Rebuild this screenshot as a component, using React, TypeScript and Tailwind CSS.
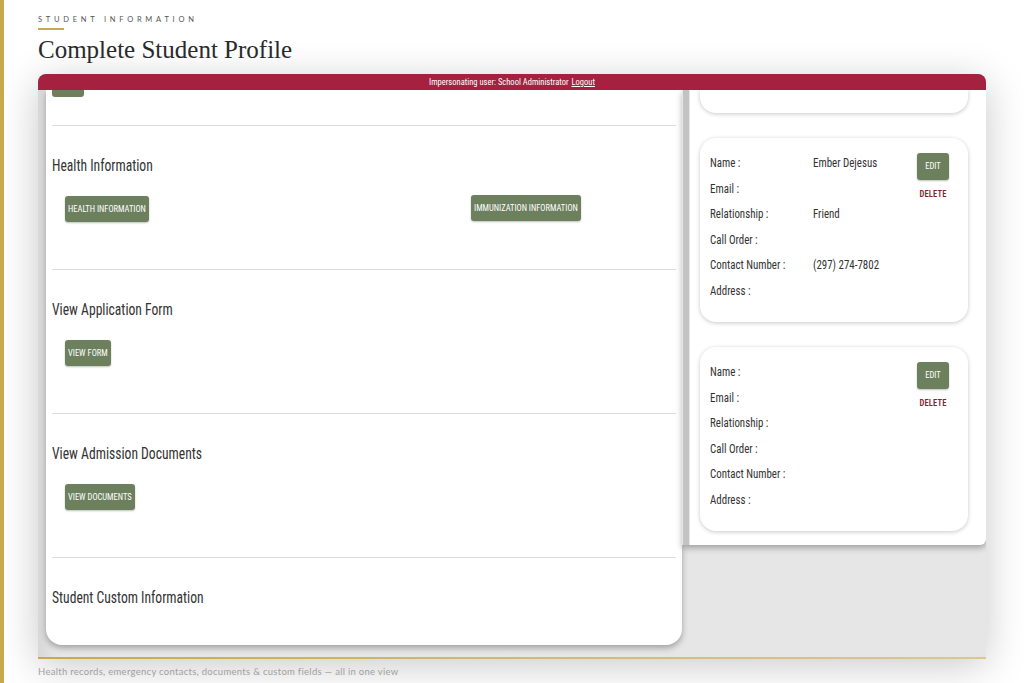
import type { FC, ReactNode } from 'react'

const cond =
  "font-['Roboto_Condensed','Liberation_Sans_Narrow','DejaVu_Sans_Condensed',Roboto,sans-serif] font-stretch-condensed"

const GreenButton: FC<{ label: string }> = ({ label }) => (
  <button
    className={`${cond} h-[26px] rounded-[3px] bg-[#6c805e] px-[3px] text-[8.5px] uppercase text-white shadow-[0_1px_2px_rgba(0,0,0,0.25)]`}
  >
    {label}
  </button>
)

const Section: FC<{ title: string; height: string; children?: ReactNode }> = ({ title, height, children }) => (
  <div className={`border-t border-[#dedede] ${height}`}>
    <h3 className="mt-[29px] origin-left scale-x-[0.8] text-[17px] leading-[20px] text-[#333]">{title}</h3>
    {children && <div className="mt-[20px] flex">{children}</div>}
  </div>
)

type Contact = {
  name?: string
  email?: string
  relationship?: string
  callOrder?: string
  phone?: string
  address?: string
}

const ContactCard: FC<{ contact: Contact }> = ({ contact }) => {
  const rows: [string, string | undefined][] = [
    ['Name :', contact.name],
    ['Email :', contact.email],
    ['Relationship :', contact.relationship],
    ['Call Order :', contact.callOrder],
    ['Contact Number :', contact.phone],
    ['Address :', contact.address],
  ]
  return (
    <div className="flex h-[184px] rounded-[16px] bg-white pl-[10px] pr-[19px] pt-[12px] shadow-[0_1px_4px_rgba(0,0,0,0.22)]">
      <div className="flex-1">
        {rows.map(([label, value]) => (
          <div key={label} className="flex h-[25.6px] items-center text-[13px] text-[#333]">
            <span className="w-[103px]">
              <span className="inline-block origin-left scale-x-[0.84]">{label}</span>
            </span>
            <span className="inline-block origin-left scale-x-[0.84]">{value}</span>
          </div>
        ))}
      </div>
      <div className="flex w-[32px] flex-col items-center pt-[3px]">
        <button
          className={`${cond} h-[27px] w-[32px] rounded-[3px] bg-[#6c805e] text-[8.5px] text-white shadow-[0_1px_2px_rgba(0,0,0,0.25)]`}
        >
          EDIT
        </button>
        <span className="mt-[8px] text-[8.5px] font-semibold tracking-[0.02em] text-[#7d2630]">DELETE</span>
      </div>
    </div>
  )
}

export default function App() {
  return (
    <div className="flex h-[683px] w-[1024px] flex-col overflow-hidden border-l-4 border-[#c9a94e] bg-white pl-[34px] pr-[38px]">
      {/* Eyebrow + title */}
      <div className="pt-[15px]">
        <p className="font-['Lato',sans-serif] text-[7.5px] leading-[9px] tracking-[0.5em] text-[#555]">
          STUDENT INFORMATION
        </p>
        <div className="mt-[4px] h-[2px] w-[26px] bg-[#c9a94e]" />
        <h1 className="mt-[5px] font-['Liberation_Serif',serif] text-[25px] leading-[30px] text-[#2b2b2b]">
          Complete Student Profile
        </h1>
      </div>

      {/* App window */}
      <div className="mt-[9px] flex h-[583px] flex-col overflow-hidden rounded-t-[8px] bg-[#e6e6e6] shadow-[0_8px_40px_rgba(0,0,0,0.22)]">
        <div className={`${cond} flex h-[16px] shrink-0 items-center justify-center bg-[#a4213f] text-[8.5px] text-white`}>
          Impersonating user: School Administrator <span className="ml-[3px] underline">Logout</span>
        </div>

        <div className={`${cond} flex flex-1 overflow-hidden`}>
          {/* Left: student details */}
          <div className="w-[644px] bg-gradient-to-r from-[#d8d8d8] to-[#e6e6e6] to-[3%] pl-[8px]">
            <div className="h-[555px] rounded-b-[16px] bg-white px-[6px] shadow-[0_3px_6px_rgba(0,0,0,0.3)]">
              <div className="h-[35px]">
                <div className="h-[7px] w-[32px] rounded-b-[3px] bg-[#6c805e]" />
              </div>
              <Section title="Health Information" height="h-[144px]">
                <div className="w-[419px] pl-[13px]">
                  <GreenButton label="Health Information" />
                </div>
                <GreenButton label="Immunization Information" />
              </Section>
              <Section title="View Application Form" height="h-[144px]">
                <div className="pl-[13px]">
                  <GreenButton label="View Form" />
                </div>
              </Section>
              <Section title="View Admission Documents" height="h-[144px]">
                <div className="pl-[13px]">
                  <GreenButton label="View Documents" />
                </div>
              </Section>
              <Section title="Student Custom Information" height="h-[88px]" />
            </div>
          </div>

          {/* Right: emergency contacts */}
          <div className="flex h-[455px] flex-1 rounded-br-[6px] bg-white shadow-[0_3px_6px_rgba(0,0,0,0.3)]">
            <div className="w-[8px] bg-[#e6e6e6] px-[1px]">
              <div className="h-full w-[6px] bg-[#c3c3c3]" />
            </div>
            <div className="flex flex-1 flex-col gap-[25px] pl-[10px] pr-[18px]">
              <div className="h-[23px] shrink-0 rounded-b-[16px] bg-white shadow-[0_1px_4px_rgba(0,0,0,0.22)]" />
              <ContactCard
                contact={{ name: 'Ember Dejesus', relationship: 'Friend', phone: '(297) 274-7802' }}
              />
              <ContactCard contact={{}} />
            </div>
          </div>
        </div>
      </div>

      {/* Caption */}
      <div className="h-[2px] bg-gradient-to-r from-[#c9a94e] to-[#d9c98f]" />
      <p className="mt-[6px] font-['Lato',sans-serif] text-[9.5px] tracking-[0.03em] text-[#a0a0a0]">
        Health records, emergency contacts, documents &amp; custom fields — all in one view
      </p>
    </div>
  )
}
